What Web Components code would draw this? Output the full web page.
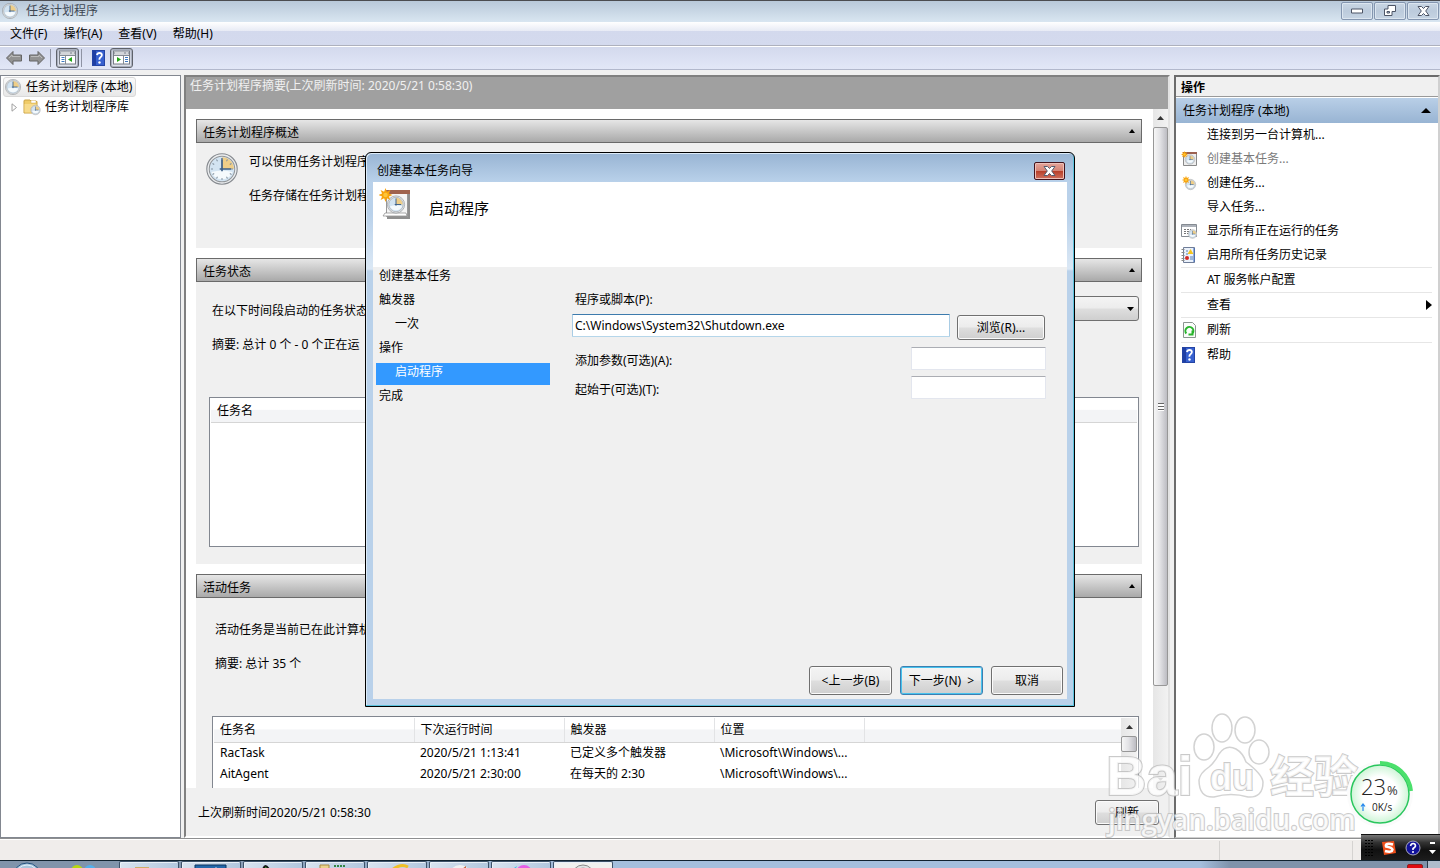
<!DOCTYPE html>
<html lang="zh-CN">
<head>
<meta charset="utf-8">
<title>任务计划程序</title>
<style>
html,body{margin:0;height:100%}
body{font:12px/16px "Noto Sans","Noto Sans CJK SC",sans-serif;color:#000;background:#f0f0f0;overflow:hidden}
</style>
</head>
<body>
<task-scheduler></task-scheduler>
<script>
const base = `<style>*{box-sizing:border-box}button,input,select{font:inherit;color:inherit;margin:0}ul{list-style:none;margin:0;padding:0}p{margin:0}svg{display:block}</style>`;
function define(name, html) {
  const tpl = document.createElement('template');
  tpl.innerHTML = base + html;
  customElements.define(name, class extends HTMLElement {
    constructor() {
      super();
      this.attachShadow({mode: 'open'}).append(tpl.content.cloneNode(true));
    }
  });
}

const clock = (cx, cy, r) => `<circle cx="${cx}" cy="${cy}" r="${r}" fill="#eceef0" stroke="#85898e" stroke-width="${r / 14}"/>
<circle cx="${cx}" cy="${cy}" r="${r * .84}" fill="#d3e4f2" stroke="#92969a" stroke-width="${r / 15}"/>
<path d="M${cx} ${cy}V${cy - r * .78}A${r * .78} ${r * .78} 0 0 1 ${cx + r * .78} ${cy}Z" fill="#efce88"/>
<path d="M${cx - r * .7} ${cy + r * .2}Q${cx} ${cy} ${cx + r * .7} ${cy + r * .2}A${r * .75} ${r * .75} 0 0 1 ${cx - r * .7} ${cy + r * .2}" fill="#f5fafd"/>
<path d="M${cx} ${cy - r * .7}V${cy + r * .15}M${cx - r * .15} ${cy}H${cx + r * .6}" stroke="#3c5f87" stroke-width="${r / 9}" fill="none"/>`;
const star = (cx, cy, r) => `<path d="${Array.from({length: 16}, (_, i) => {
  const a = i * Math.PI / 8, q = i % 2 ? r * .52 : r;
  return (i ? 'L' : 'M') + (cx + q * Math.cos(a)).toFixed(2) + ' ' + (cy + q * Math.sin(a)).toFixed(2);
}).join('')}Z" fill="#f8a30c"/><circle cx="${cx}" cy="${cy}" r="${r * .32}" fill="#fdc53a"/>`;
const help = `<rect x="1.500" y=".5" width="12" height="15" fill="#3660cf" stroke="#2444a4"/><path d="M2 1h3v14H2z" fill="#1f3fa4"/><path d="M6 5.200Q6.200 3 8.500 3T10.900 5.100Q10.900 6.300 9.500 7.300T8.500 9.800" fill="none" stroke="#fff" stroke-width="1.800"/><circle cx="8.500" cy="12.500" r="1.200" fill="#fff"/>`;
const tool = (arrow, side) => `<rect x=".5" y="1" width="16" height="13" fill="#fff" stroke="#777d86"/><path d="M1 1.500h15v3H1z" fill="#a6abb3"/><path d="M2 3h9M13 3h2" stroke="#fff"/><path d="M1 5.500h15M${side ? 10.5 : 6.5} 6v8" stroke="#858b94" fill="none"/><path d="M${side ? 12 : 2.5} 7.500h3m-3 2h3m-3 2h3" stroke="#3f7bc2"/><path d="${arrow}" fill="#23a516"/>`;
const ICONS = {
  clock: [16, clock(8, 8, 7.6)],
  bigclock: [32, clock(16, 16, 15.2) + Array.from({length: 12}, (_, i) => `<path d="M16 5v2" stroke="#8392a0" transform="rotate(${i * 30} 16 16)"/>`).join('')],
  back: [18, `<path d="M1.500 9 8 2.500V6h8.500v6H8v3.500Z" fill="#929292" stroke="#656565"/><path d="M4 9 7 6v1.500h8" stroke="#bbb" fill="none"/>`],
  forward: [18, `<path d="M16.500 9 10 2.500V6H1.500v6H10v3.500Z" fill="#929292" stroke="#656565"/><path d="M3 7.500h8V6l3 3" stroke="#bbb" fill="none"/>`],
  tree: [17, tool('M13 7v5L9 9.500Z', 0)],
  act: [17, tool('M4 7v5l4-2.500Z', 1)],
  help: [16, help],
  folder: [18, `<path d="M1 3q0-1 1-1h5l1.500 1.500H14V15H1Z" fill="#f0cc69" stroke="#caa245"/><path d="M8 2.500h5V5H8z" fill="#fff" stroke="#d3ae59" stroke-width=".5"/><path d="M1.500 6h12v8.500h-12z" fill="#f7db8c"/>` + clock(12.5, 12, 4.8)],
  basic: [16, `<path d="M2.500 1.500h13v13h-13z" fill="#eee" stroke="#888"/><path d="M2 1h14v2H2z" fill="#9c6150"/>` + clock(9, 8.5, 4.8) + star(3.5, 3.5, 3.5)],
  wizard: [34, `<path d="M8 4h23v27H8z" fill="#8f8f8f"/><path d="M7.500 3.500h21v25h-21z" fill="#f5f5f5" stroke="#999"/><path d="M7 2h24v4H7z" fill="#a0634e"/><path d="M4 28h24l-1-3H6Z" fill="#fff" stroke="#888" stroke-width=".7"/>` + clock(17, 16.5, 8.6) + star(6.5, 7, 7)],
  create: [16, clock(9.5, 9.5, 5.2) + star(5, 5, 4.2)],
  running: [16, `<path d="M.5 1.500h15v12H.5z" fill="#fff" stroke="#858b92"/><path d="M1 2h14v2H1z" fill="#adb2ba"/><path d="M3 6.500h7M3 8.500h5M3 10.500h5" stroke="#777" stroke-dasharray="2 1"/>` + clock(11.5, 11, 4.4)],
  history: [16, `<path d="M2.500.500h11v15h-11z" fill="#eaf1fb" stroke="#6f7d98"/><path d="M.5 2.500h3m-3 3h3m-3 3h3m-3 3h3m-3 2h3" stroke="#888"/><path d="M13 1v14" stroke="#3867b8"/><path d="m9.500 2 3 5h-6z" fill="#f5c51c"/><path d="M5 4h2M5 7h2m2 3h3m-3 2h3" stroke="#5780ba"/><circle cx="6" cy="11" r="2" fill="#d42b25"/>`],
  refresh: [16, `<path d="M2.500.500h9l3 3v12h-12z" fill="#fbfdfb" stroke="#8b9590"/><path d="M5.300 11.500a4 4 0 1 1 6 .2M11.500 8.500v4h-4" fill="none" stroke="#28b52c" stroke-width="2"/>`]
};
customElements.define('tm-icon', class extends HTMLElement {
  connectedCallback() {
    if (this.shadowRoot) return;
    const [n, art] = ICONS[this.getAttribute('name')];
    const root = this.attachShadow({mode: 'open'});
    root.innerHTML = `<style>:host{display:block;flex:none}svg{display:block}</style><svg width="${n}" height="${n}" viewBox="0 0 ${n} ${n}" aria-hidden="true">${art}</svg>`;
  }
});

define('win-button', `<style>
:host{display:block;--edge:#707070}
:host([primary]){--edge:#3c7fb1;--glow:#48c3ee}
button{width:100%;height:100%;padding:1px 0 0;border:1px solid var(--edge);border-radius:3px;background:linear-gradient(#f4f4f4,#ececec 48%,#dedede 52%,#cfcfcf);box-shadow:inset 0 0 0 1px var(--glow,#fbfbfb);text-align:center;white-space:nowrap}
</style><button type="button"><slot></slot></button>`);

define('scroll-bar', `<style>
:host{display:flex;flex-direction:column;width:16px;background:linear-gradient(90deg,#e6e6e6,#f2f2f2)}
.end{height:18px;flex:none;display:grid;place-items:center}
.thumb{flex:var(--thumb,1) 1 0;border:1px solid #979797;border-radius:2px;background:linear-gradient(90deg,#f6f6f6,#e3e3e6 45%,#bcbcc2);display:grid;place-items:center}
.rest{flex:var(--rest,1) 1 0}
.grip{width:6px;height:8px;background:repeating-linear-gradient(#666 0 1px,#fff 1px 3px)}
:host([plain]) .grip{display:none}
</style><div class="end"><svg width="7" height="4"><path d="M0 4h7L3.500 0Z" fill="#333"/></svg></div><div class="thumb"><div class="grip"></div></div><div class="rest"></div><div class="end"><svg width="7" height="4"><path d="M0 0h7L3.500 4Z" fill="#555"/></svg></div>`);

define('title-bar', `<style>
:host{display:flex;align-items:center;height:22px;border-top:1px solid #4b4c50;background:linear-gradient(#b8c8d9,#d9e6f1);padding:0 1px 2px 2px;color:#3c4652}
span{flex:1;padding-left:8px}
div{display:flex;gap:1px}
button{width:32px;height:18px;padding:0;border:1px solid #8496b0;border-radius:2px;background:linear-gradient(#c9d6e4,#bccbdc 50%,#c6d4e3);box-shadow:inset 0 0 0 1px #dce6f0;display:grid;place-items:center}
path{fill:#fff;stroke:#4d5566}
</style><tm-icon name="clock"></tm-icon><span>任务计划程序</span><div>
<button aria-label="最小化"><svg width="12" height="6"><path d="M.5 1h11v4H.5z"/></svg></button>
<button aria-label="还原"><svg width="12" height="11"><path fill-rule="evenodd" d="M4 .5h7.500v6H8v4H.5V4H4ZM3 6.500v1.500h2.500V6.500Z"/></svg></button>
<button aria-label="关闭"><svg width="13" height="10"><path d="M1 .5h3.500l2 2 2-2H12L8.700 5 12 9.500H8.500l-2-2-2 2H1L4.300 5Z"/></svg></button></div>`);

define('menu-bar', `<style>
:host{display:block;height:24px;border-bottom:1px solid #aeb1bd;background:linear-gradient(#fff,#e8ebf5 38%,#d3d9ed 40%,#d4daee)}
nav{display:flex;padding:3px 2px}
button{border:0;background:none;padding:0 8px;height:18px;line-height:18px}
</style><nav><button>文件(F)</button><button>操作(A)</button><button>查看(V)</button><button>帮助(H)</button></nav>`);

define('tool-bar', `<style>
:host{display:flex;align-items:center;height:24px;padding:0 2px;border-top:1px solid #fff;border-bottom:1px solid #b2b8cc;background:linear-gradient(#d3d9ed,#e2e7f7)}
button{border:0;background:none;padding:0;width:23px;height:20px;display:grid;place-items:center}
.on{border:1px solid #5f636b;border-radius:3px;background:linear-gradient(#c5cad8,#dfe2ea);box-shadow:inset 0 0 0 1px #aab0bf}
i{width:1px;height:18px;background:#8e93a3;margin:0 5px 0 2px}
</style><button aria-label="后退"><tm-icon name="back"></tm-icon></button><button aria-label="前进"><tm-icon name="forward"></tm-icon></button><i></i><button class="on" aria-label="显示控制台树"><tm-icon name="tree"></tm-icon></button><i></i><button aria-label="帮助"><tm-icon name="help"></tm-icon></button><button class="on" aria-label="显示操作窗格"><tm-icon name="act"></tm-icon></button>`);

define('tree-pane', `<style>
:host{display:block;background:#fff;border:1px solid #828790;padding:1px 2px}
li{display:flex;align-items:center;height:20px;white-space:nowrap}
.root{width:max-content;border:1px solid #d9d9d9;border-radius:3px;background:linear-gradient(#fafafa,#e8e8e8);padding:0 3px 0 1px;gap:5px}
.leaf{padding-left:8px;gap:4px}
.leaf tm-icon{margin-left:1px}
</style><ul><li class="root"><tm-icon name="clock"></tm-icon>任务计划程序 (本地)</li><li class="leaf"><svg width="7" height="9"><path d="M1 .8v7.400L5.500 4.500Z" fill="#fff" stroke="#a0a0a0"/></svg><tm-icon name="folder"></tm-icon>任务计划程序库</li></ul>`);

define('section-panel', `<style>
:host{display:flex;flex-direction:column;background:#f0f0f0}
header{display:flex;justify-content:space-between;align-items:center;height:24px;flex:none;border:1px solid #6a6a6a;background:linear-gradient(#e6e6e6,#a9a9a9);padding:4px 6px 0}
svg{margin-top:-4px}
.body{flex:1;min-height:0}
</style><header><slot name="title"></slot><svg width="6" height="4"><path d="M0 4h6L3 0Z"/></svg></header><div class="body"><slot></slot></div>`);

define('status-list', `<style>
:host{display:block;height:150px;border:1px solid #828790;background:#fff;padding:1px}
table{width:100%;border-collapse:collapse}
th{font-weight:400;text-align:left;height:23px;padding:1px 6px 0;border-bottom:1px solid #d5d5d5;background:linear-gradient(#fff 45%,#f3f4f6 50%)}
</style><table><thead><tr><th>任务名</th></tr></thead></table>`);

define('active-list', `<style>
:host{display:flex;border:1px solid #828790;background:#fff;padding:1px;height:170px}
.wrap{flex:1}
table{width:100%;table-layout:fixed;border-collapse:collapse}
col.a{width:200px}col.b{width:150px}
th{font-weight:400;text-align:left;height:24px;padding:0 6px;border-bottom:1px solid #d5d5d5;border-right:1px solid #e2e3e5;background:linear-gradient(#fff 45%,#f3f4f6 50%)}
th:last-child{border-right:0}
td{height:21px;padding:0 6px;white-space:nowrap}
</style><div class="wrap"><table><colgroup><col class="a"><col class="b"><col class="b"><col class="b"><col></colgroup><thead><tr><th>任务名</th><th>下次运行时间</th><th>触发器</th><th>位置</th><th></th></tr></thead>
<tbody><tr><td>RacTask</td><td>2020/5/21 1:13:41</td><td>已定义多个触发器</td><td>\\Microsoft\\Windows\\...</td><td></td></tr><tr><td>AitAgent</td><td>2020/5/21 2:30:00</td><td>在每天的 2:30</td><td>\\Microsoft\\Windows\\...</td><td></td></tr></tbody></table></div><scroll-bar plain style="--thumb:14;--rest:112"></scroll-bar>`);

define('summary-pane', `<style>
:host{display:flex;flex-direction:column;min-width:0;min-height:0;margin-left:-1px;background:#f0f0f0;border:2px solid #a0a0a0;border-color:#808080 #e3e3e3 #fff #808080}
h1{flex:none;margin:0;height:32px;padding:1px 4px;background:#a0a0a0;color:#f0f0f0;font:inherit}
.scroll{flex:1;min-height:0;display:flex;background:#fff;overflow:hidden}
.list{flex:1;min-width:0;display:flex;flex-direction:column;gap:10px;padding:10px 11px 0 10px}
.over{height:129px;flex:none}.state{height:306px;flex:none}.active{flex:1}
.intro{display:flex;gap:11px;padding:10px}
.intro p{padding-top:1px}
.intro p+p{margin-top:17px}
.pad{padding:21px 3px 0 13px}
.row{display:flex;align-items:flex-start;height:16px;padding-left:3px;white-space:nowrap}
.row+.row{margin-top:18px}
.select{position:relative;margin:-7px 0 0 auto}
select{display:block;appearance:none;width:240px;height:25px;border:1px solid #707070;border-radius:3px;background:linear-gradient(#f4f4f4,#ececec 48%,#dedede 52%,#cfcfcf)}
.select svg{position:absolute;right:5px;top:11px;pointer-events:none}
status-list{margin-top:44px}
.active .pad{padding:24px 3px 0 16px}
active-list{margin-top:44px}
footer{display:flex;align-items:center;justify-content:space-between;flex:none;height:48px;padding:0 9px 0 12px}
footer win-button{width:64px;height:25px}
footer span{padding-top:2px}
.main{width:15px}
</style><h1>任务计划程序摘要(上次刷新时间: 2020/5/21 0:58:30)</h1>
<div class="scroll"><div class="list">
<section-panel class="over"><span slot="title">任务计划程序概述</span><div class="intro"><tm-icon name="bigclock"></tm-icon><div><p>可以使用任务计划程序</p><p>任务存储在任务计划程</p></div></div></section-panel>
<section-panel class="state"><span slot="title">任务状态</span><div class="pad"><div class="row"><label for="period">在以下时间段启动的任务状态</label><div class="select"><select id="period"><option></option></select><svg width="7" height="4"><path d="M0 0h7L3.500 4Z"/></svg></div></div><div class="row">摘要: 总计 0 个 - 0 个正在运</div><status-list></status-list></div></section-panel>
<section-panel class="active"><span slot="title">活动任务</span><div class="pad"><div class="row">活动任务是当前已在此计算机</div><div class="row">摘要: 总计 35 个</div><active-list></active-list></div></section-panel>
</div><scroll-bar class="main" style="--thumb:559;--rest:84"></scroll-bar></div>
<footer><span>上次刷新时间2020/5/21 0:58:30</span><win-button>刷新</win-button></footer>`);

define('action-item', `<style>
:host{display:block;margin:0 6px 0 5px}
:host([rule]){border-top:1px solid #e6e6e6}
:host([disabled]){color:#7a7a7a}
button{display:flex;align-items:center;width:100%;height:24px;padding:0;border:0;background:none;text-align:left}
.icon{width:26px;flex:none;display:flex}
.text{flex:1}
</style><button type="button"><span class="icon"><slot name="icon"></slot></span><span class="text"><slot></slot></span><slot name="more"></slot></button>`);

define('actions-pane', `<style>
:host{display:block;background:#fff;border:1px solid #d0d0d0;border-left:2px solid #6c6c6c;border-top:2px solid #6c6c6c;border-right-width:2px}
h2,h3{margin:0;font-size:12px;line-height:16px}
h2{background:#f0f0f0;border-bottom:1px solid #999;height:20px;padding:3px 5px 0}
h3{font-weight:400;display:flex;align-items:center;justify-content:space-between;height:25px;margin-top:1px;padding:0 7px;background:linear-gradient(#b9cfe7,#98b4d3)}
</style><h2>操作</h2><h3>任务计划程序 (本地)<svg width="10" height="5"><path d="M0 5h10L5 0Z"/></svg></h3>
<action-item>连接到另一台计算机...</action-item>
<action-item disabled><tm-icon slot="icon" name="basic"></tm-icon>创建基本任务...</action-item>
<action-item><tm-icon slot="icon" name="create"></tm-icon>创建任务...</action-item>
<action-item>导入任务...</action-item>
<action-item><tm-icon slot="icon" name="running"></tm-icon>显示所有正在运行的任务</action-item>
<action-item><tm-icon slot="icon" name="history"></tm-icon>启用所有任务历史记录</action-item>
<action-item rule>AT 服务帐户配置</action-item>
<action-item rule>查看<svg slot="more" width="6" height="10"><path d="M0 0v10l6-5Z"/></svg></action-item>
<action-item rule><tm-icon slot="icon" name="refresh"></tm-icon>刷新</action-item>
<action-item rule><tm-icon slot="icon" name="help"></tm-icon>帮助</action-item>`);

define('wizard-dialog', `<style>
:host{display:flex;flex-direction:column;width:710px;height:555px;border:1px solid #000;border-radius:6px 6px 0 0;background:linear-gradient(#98b4d3,#b9d1ea 29px,#b9d1ea 60px,#dbe8f5 116px,#b9d1ea 118px);box-shadow:inset -1px -1px #5cc3dd,inset 1px 1px #dcebf8;padding:0 7px 7px}
.title{display:flex;align-items:center;justify-content:space-between;height:29px;flex:none;padding:7px 2px 0 4px}
.close{width:31px;height:18px;padding:0;display:grid;place-items:center;border:1px solid #43131c;border-radius:2px;background:linear-gradient(#e5a59b,#d58476 48%,#b8402b 52%,#cf7160);box-shadow:inset 0 0 0 1px #eec1ba}
.banner{display:flex;gap:16px;height:85px;flex:none;background:#fff;padding:6px}
.banner h2{margin:0;font-weight:400;font-size:15px;line-height:20px;padding-top:10px}
.main{flex:1;display:grid;grid-template-columns:177px 1fr;column-gap:22px;background:#f0f0f0}
li{height:22px;margin:0 0 2px 3px;padding:1px 3px 0}
.sub{padding-left:19px}
.now{background:#3399ff;color:#fff}
form{display:flex;flex-direction:column;padding:20px 21px 0 0}
.top{padding:5px 3px 6px}
.row{display:flex;justify-content:space-between;align-items:center;margin-bottom:6px}
.row label{padding-left:3px;padding-top:5px}
input{height:23px;border:1px solid #e3e6ee;border-top-color:#abadb3;border-radius:1px;background:#fff;padding:0 2px;width:135px}
.path{flex:1;border-color:#3d7bad #a9cce4 #b5d6ea #a9cce4;margin-right:7px}
.path+win-button{width:88px;height:25px}
.first{align-items:flex-start;margin-bottom:7px;padding-right:1px}
.first win-button{margin-top:1px}
.foot{display:flex;justify-content:flex-end;gap:8px;background:#f0f0f0;padding:0 4px 4px}
.foot win-button{width:83px;height:29px}
.foot win-button:last-child{width:72px}
</style>
<div class="title"><span>创建基本任务向导</span><button class="close" aria-label="关闭"><svg width="13" height="10"><path d="M1 .5h3.500l2 2 2-2H12L8.700 5 12 9.500H8.500l-2-2-2 2H1L4.300 5Z" fill="#fff" stroke="#555d70"/></svg></button></div>
<div class="banner"><tm-icon name="wizard"></tm-icon><h2>启动程序</h2></div>
<div class="main"><ul><li>创建基本任务</li><li>触发器</li><li class="sub">一次</li><li>操作</li><li class="sub now">启动程序</li><li>完成</li></ul>
<form><label class="top" for="prog">程序或脚本(P):</label>
<div class="row first"><input class="path" id="prog" value="C:\\Windows\\System32\\Shutdown.exe"><win-button>浏览(R)...</win-button></div>
<div class="row"><label for="args">添加参数(可选)(A):</label><input id="args"></div>
<div class="row"><label for="start">起始于(可选)(T):</label><input id="start"></div></form></div>
<div class="foot"><win-button>&lt;上一步(B)</win-button><win-button primary>下一步(N)&nbsp; &gt;</win-button><win-button>取消</win-button></div>`);

define('status-bar', `<style>
:host{display:flex;justify-content:flex-end;height:22px;border-top:1px solid #8e8f90;background:#f0edeb;box-shadow:inset 0 1px #fff}
i{width:133px;border-left:1px solid #d5d3d1;margin-top:2px}
i:last-child{width:88px}
</style><i></i><i></i>`);

define('task-bar', `<style>
:host{display:flex;height:8px;overflow:hidden;border-top:1px solid #10222f;background:linear-gradient(90deg,#8094ab,#8094ab 118px,#a4bfdd 614px,#a4bfdd calc(100% - 240px),#7f93ab calc(100% - 210px))}
.start{width:119px;flex:none}
.tasks{display:flex;gap:2px;flex:1}
.tasks span{width:60px;border:1px solid #3d5269;border-bottom:0;border-radius:2px 2px 0 0;background:linear-gradient(110deg,#d9e4f0,#b2c7de);box-shadow:inset 1px 1px #e8f0f8;display:flex;justify-content:center}
.tasks .on{background:#f0f1ef}
.tray{display:flex;align-items:flex-start;gap:4px;padding-top:3px}
.tray b{width:16px;height:8px;background:#e00a10;border-radius:2px;border:1px solid #822}
.tray u{width:13px;height:8px;margin-top:-3px;background:#aebccc;border-left:1px solid #2a3847}
</style><svg class="start" width="119" height="7"><circle cx="27" cy="16" r="14" fill="#a9c5dc" stroke="#23517c"/><circle cx="27" cy="16" r="12" fill="none" stroke="#e0f0fa"/><circle cx="77" cy="10" r="6" fill="#b8d80d"/><circle cx="90" cy="10" r="6" fill="#52b0ec"/></svg>
<div class="tasks">
<span><svg width="50" height="7"><path d="M11 5h14v3H11z" fill="#d0ad68"/></svg></span>
<span><svg width="50" height="7"><path d="M9 3h31v5H9z" fill="#2467a9" stroke="#0a3560"/><path d="M28 8l2-3 2 3" fill="#fff"/></svg></span>
<span><svg width="50" height="7"><path d="M14 7q3-8 8 0" fill="#111"/><path d="m17 5 3 2" stroke="#47a331"/></svg></span>
<span><svg width="50" height="7"><path d="M10 3h9v5h-9z" fill="#ead38a" stroke="#a98a43"/><path d="M24 4h11" stroke="#348644" stroke-width="2" stroke-dasharray="2 1"/></svg></span>
<span><svg width="50" height="7"><path d="M20 8q9-7 16-3" fill="none" stroke="#efbf26" stroke-width="3"/><path d="M18 8q5-3 10 0" fill="#4aa4df"/></svg></span>
<span><svg width="50" height="7"><circle cx="26" cy="14" r="11" fill="#f0f1f2"/><path d="m28 7 4-3v4z" fill="#c3683d"/></svg></span>
<span><svg width="50" height="7"><circle cx="28" cy="11" r="8" fill="#e65de5"/><path d="m15 8 6-4-2 4z" fill="#3dbde9"/></svg></span>
<span class="on"><svg width="50" height="7"><circle cx="25" cy="14" r="11" fill="#e0e3e4" stroke="#888"/><circle cx="25" cy="14" r="8" fill="#edf2f5" stroke="#999"/></svg></span></div>
<div class="tray"><b></b><u></u></div>`);

define('water-mark', `<style>
:host{display:block;width:260px;height:130px;pointer-events:none}
text{fill:#fff;fill-opacity:.8;stroke:#bdbdbd;stroke-opacity:.8;stroke-width:2;paint-order:stroke}
.cn{font:700 44px "Noto Sans CJK SC",sans-serif}
.en{font:700 56px "Liberation Sans",sans-serif}
.du{font:700 36px "Liberation Sans",sans-serif}
.url{font:600 28px "Open Sans","Noto Sans",sans-serif}
.paw{fill:#fff;fill-opacity:.8;stroke:#d3d3d3;stroke-width:1.500}
</style><svg width="260" height="130" viewBox="0 0 260 130"><g class="paw"><ellipse cx="99" cy="36" rx="10" ry="13"/><ellipse cx="117" cy="17" rx="10" ry="14"/><ellipse cx="140" cy="19" rx="10" ry="13"/><ellipse cx="154" cy="41" rx="10" ry="12"/><path d="M94 69Q95 62 104 56 110 51 114 43 121 33 131 38 138 42 141 51 157 63 158 71 158 87 143 86 126 81 109 86 94 87 94 69Z"/></g><text class="en" x="1" y="84">Bai</text><text class="du" x="105" y="79">du</text><text class="cn" x="165" y="82">经验</text><text class="url" x="3" y="119">jingyan.baidu.com</text></svg>`);

define('speed-ball', `<style>
:host{display:block;width:66px;height:66px}
.n{font:300 22px "Open Sans",sans-serif;fill:#222}.s{font:10px "Open Sans",sans-serif;fill:#222}
.p{font:13px "Open Sans",sans-serif;fill:#333}
</style><svg width="66" height="66" viewBox="0 0 66 66"><defs><radialGradient id="g"><stop offset=".6" stop-color="#fff"/><stop offset="1" stop-color="#cdf5d6"/></radialGradient></defs><circle cx="33" cy="33" r="33" fill="#fbfbfb"/><circle cx="33" cy="33" r="29" fill="url(#g)" stroke="#29c65d" stroke-width="1.500"/><path d="M33 2A31 31 0 0 1 64 30" fill="none" stroke="#4be06c" stroke-width="4"/><text class="n" x="14" y="34">23</text><text class="p" x="40" y="34">%</text><path d="M16 50v-7m-2 2.500 2-2.500 2 2.500" stroke="#2488ee" stroke-width="1.200" fill="none"/><text class="s" x="25" y="50">0K/s</text></svg>`);

define('input-bar', `<style>
:host{display:flex;align-items:center;width:79px;height:26px;background:linear-gradient(#777,#333 30%,#111 60%,#1c1c1c);border-top:1px solid #111;padding:0 4px;gap:8px}
svg{flex:none}
</style><svg width="8" height="18"><path d="M1 1v17M4 1v17M7 1v17" stroke="#000" stroke-width="2" stroke-dasharray="1 2"/></svg><svg width="16" height="16"><path d="m1 2 12-1 2 12-12 2z" fill="#f0501c"/><path d="M12 4.500Q4 2.500 5 6.500q6 1 6.500 3Q11 13 4 11" fill="none" stroke="#fff" stroke-width="2.500"/></svg><svg width="16" height="16"><circle cx="8" cy="8" r="7" fill="#12129a" stroke="#a9a9bd"/><path d="M5.500 6Q6 3.500 8.200 3.500T10.500 6Q10 7.500 8 8.500v1.500" fill="none" stroke="#fff" stroke-width="1.600"/><circle cx="8" cy="12" r="1" fill="#fff"/></svg><svg width="8" height="14"><path d="M1 1h5v2H1zM0 9h7l-3.500 4Z" fill="#fff"/></svg>`);

define('task-scheduler', `<style>
:host{display:flex;flex-direction:column;height:100vh;position:relative;background:#f0f0f0}
main{flex:1;min-height:0;display:grid;grid-template-columns:181px minmax(0,1fr) 266px;column-gap:4px;padding-top:5px}
.overlay{position:absolute;inset:0 0 9px 0;display:grid;place-items:center}
water-mark{position:absolute;right:75px;bottom:27px}
speed-ball{position:absolute;right:27px;bottom:41px}
input-bar{position:absolute;right:0;bottom:8px}
</style><title-bar></title-bar><menu-bar></menu-bar><tool-bar></tool-bar>
<main><tree-pane></tree-pane><summary-pane></summary-pane><actions-pane></actions-pane></main>
<status-bar></status-bar><task-bar></task-bar>
<div class="overlay"><wizard-dialog></wizard-dialog></div>
<water-mark></water-mark><speed-ball></speed-ball><input-bar></input-bar>`);
</script>
</body>
</html>
